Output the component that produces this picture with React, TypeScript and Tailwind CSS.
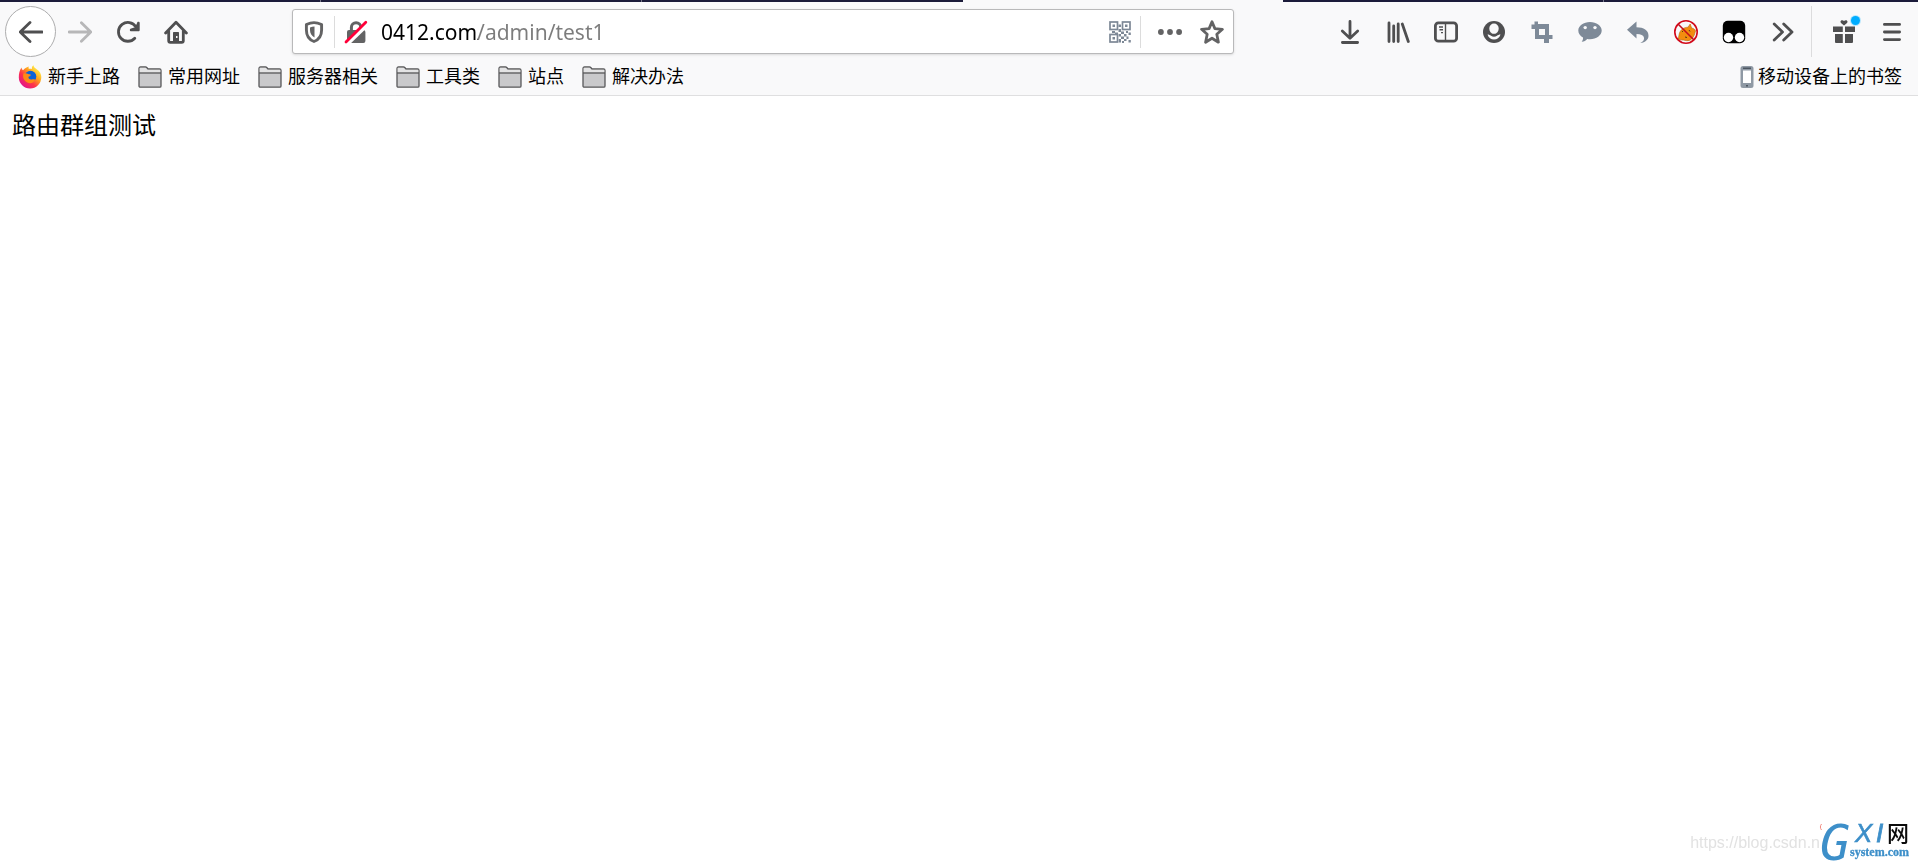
import type { ReactNode } from "react";

type IconProps = { children: ReactNode; className?: string };

function Icon({ children, className = "" }: IconProps) {
  return (
    <svg viewBox="0 0 24 24" className={`h-6 w-6 shrink-0 ${className}`} fill="none" aria-hidden="true">
      {children}
    </svg>
  );
}

const stroke = {
  stroke: "currentColor",
  strokeWidth: 2.8,
  strokeLinecap: "round",
  strokeLinejoin: "round",
} as const;

const BackIcon = () => (
  <Icon>
    <path {...stroke} d="M23.2 12H1.2M11 2.4 1.2 12l9.8 9.6" />
  </Icon>
);

const ForwardIcon = () => (
  <Icon>
    <path {...stroke} d="M1 12h21.8M13.4 2.8 22.8 12l-9.4 9.2" />
  </Icon>
);

const ReloadIcon = () => (
  <Icon>
    <path {...stroke} d="M18.8 18.2A9.4 9.4 0 1 1 19.8 6.8" />
    <path d="M22.4 1.8c-.8 0-1.3.5-1.3 1.200L19 7.200l-4.600 1.500c-.8.3-.8 2.600.4 2.600h7.600c.8 0 1.300-.5 1.300-1.300V3c0-.7-.5-1.200-1.300-1.200z" fill="currentColor" />
  </Icon>
);

const HomeIcon = () => (
  <Icon>
    <path {...stroke} d="M1.600 13 12 2.200 22.400 13M4.700 11v9.800c0 1 .6 1.600 1.600 1.600h11.400c1 0 1.600-.6 1.600-1.600V11" />
    <path d="M9 22v-9c0-.6.4-1 1-1h4c.6 0 1 .4 1 1v9z" fill="currentColor" />
    <rect x="12" y="16" width="1.500" height="2" fill="#f9f9fa" />
  </Icon>
);

const ShieldIcon = () => (
  <Icon>
    <path
      d="M12 2.600c2.500 0 5 .7 7.600 1.900V10c0 5.300-2.400 9.600-7.600 11.500C6.800 19.600 4.400 15.300 4.400 10V4.500C7 3.300 9.500 2.600 12 2.600z"
      stroke="currentColor"
      strokeWidth="2.900"
      strokeLinejoin="round"
    />
    <path d="M12.500 6.600c-1.500 0-3 .3-4.500.8V10c0 3.200 1.400 6 4.500 7.400z" fill="currentColor" />
  </Icon>
);

const InsecureIcon = () => (
  <Icon>
    <path d="M7.400 11V7.500a4.700 4.700 0 0 1 9.400 0V11" stroke="currentColor" strokeWidth="3" />
    <rect x="3" y="10" width="18.400" height="13" rx="2" fill="currentColor" />
    <path d="M3 23.500 23.500 3.800" stroke="#fff" strokeWidth="5" />
    <path d="M2 22 21.800 2.200" stroke="#ff0039" strokeWidth="2.800" strokeLinecap="round" />
  </Icon>
);

const QrIcon = () => (
  <Icon className="text-[#7d8896]">
    <g stroke="currentColor" strokeWidth="1.700">
      <rect x="2" y="2" width="7.500" height="7.500" />
      <rect x="14.500" y="2" width="7.500" height="7.500" />
      <rect x="2" y="14.500" width="7.500" height="7.500" />
    </g>
    <path
      d="M4.500 4.500h2.500v2.500H4.500zM17 4.500h2.500v2.500h-2.500zM4.500 17h2.500v2.500H4.500zM10.500 4.500h2.500v2.500h-2.500zM10.500 9h2.500v3h-2.500zM4 11h3v2H4zM7 12.500h3v1.500H7zM13 11.500h3v2.500h-3zM18 11h2v2h-2zM20.500 12.500h2.300v2.500h-2.300zM10.700 14h2.300v2.500h-2.300zM16 14h2.500v2.500H16zM13 16.500h3V19h-3zM18.500 16.500h2v2.500h-2zM10.700 19H13v3.500h-2.300zM16 19h2.500v2H16zM14 21h2v2h-2zM20.500 20h2.300v2.500h-2.300z"
      fill="currentColor"
    />
  </Icon>
);

const DotsIcon = () => (
  <Icon>
    <g fill="currentColor">
      <circle cx="2.900" cy="12" r="2.900" />
      <circle cx="12" cy="12" r="2.900" />
      <circle cx="21.100" cy="12" r="2.900" />
    </g>
  </Icon>
);

const StarIcon = () => (
  <Icon>
    <path
      {...stroke}
      d="M12 1.800 14.900 8.600 22.400 9.300 16.800 14.300 18.400 22.200 12 18.200 5.600 22.200 7.200 14.300 1.600 9.300 9.100 8.600Z"
    />
  </Icon>
);

const DownloadIcon = () => (
  <Icon>
    <path {...stroke} d="M12 1.500v16.300M4.300 11l7.700 7.200 7.700-7.200M4.400 22.500h15.200" />
  </Icon>
);

const LibraryIcon = () => (
  <Icon>
    <path {...stroke} d="M3 3v18.500M7.700 6v15.500M12.200 4v17.500M16.300 4l6 17.500" />
  </Icon>
);

const SidebarIcon = () => (
  <Icon>
    <rect x="1.400" y="2.800" width="21.200" height="18.400" rx="3" stroke="currentColor" strokeWidth="2.800" />
    <path d="M11.500 3v18M5 7h4M5.500 9.700H9M7 12.600h2" stroke="currentColor" strokeWidth="1.400" />
  </Icon>
);

const AccountIcon = () => (
  <Icon>
    <circle cx="12" cy="12" r="11" fill="currentColor" />
    <path d="M7.300 8.200a4.700 4.700 0 0 1 9.400 0c0 3-1.700 5.600-4.700 5.600s-4.700-2.600-4.700-5.600z" fill="#f9f9fa" />
    <path d="M5.500 14.500c1.500 0 2.700.6 3.500 1.300 1.800 1.200 4.200 1.200 6 0 .8-.7 2-1.300 3.500-1.300-1 3.300-3.500 5-6.500 5s-5.500-1.700-6.500-5z" fill="#f9f9fa" />
  </Icon>
);

const CropIcon = () => (
  <Icon className="text-[#7e8a98]">
    <path d="M4.500 1.500H8V4h11v11h3.500v4H19v4h-5v-4H5V9H1.500V4.500h3zM9 9v6h6V9z" fill="currentColor" fillRule="evenodd" />
  </Icon>
);

const ChatIcon = () => (
  <Icon className="text-[#7e8a98]">
    <path d="M12 2c6.400 0 11.700 3.700 11.700 8.500S18.400 19.200 12 19.200c-1 0-1.900 0-2.800-.3-1.300 1.500-3 2.600-5.500 2.900 1-1.200 1.500-2.500 1.300-4.300C2.200 15.900.3 13.500.3 10.500.3 5.700 5.600 2 12 2z" fill="currentColor" />
    <circle cx="7.200" cy="7.600" r="1.700" fill="#f9f9fa" />
    <circle cx="17" cy="7.600" r="1.700" fill="#f9f9fa" />
  </Icon>
);

const UndoIcon = () => (
  <Icon className="text-[#7e8a98]">
    <path d="M10.500 1.500v5.800c7.300 0 12 3 12 8.500 0 3.800-3 6.700-8.200 7.200 3.300-1.600 4-3.500 3.700-5.300-.5-2.500-3-3.700-7.500-3.700v4.500L1 9.800z" fill="currentColor" />
  </Icon>
);

const BlockedFoxIcon = () => (
  <Icon>
    <path d="M4 19c1-2 .8-4 1.500-6C7 9 10 7.500 14 7.200L16.200 4l1.400 4c2.200.5 3.500 1.400 3.900 3-.8 3.500-2.500 8.500-6.500 9.500-3 .7-5.500-.8-7-.5z" fill="#f28c0f" stroke="#b0660f" strokeWidth=".6" />
    <path d="m8 11 1 1M15 10l1 1.500M11 17l2 .5" stroke="#5b3a12" strokeWidth="1" />
    <circle cx="12" cy="12" r="11.200" stroke="#d2091a" strokeWidth="1.600" />
    <path d="m4 4 16 16" stroke="#c40d1c" strokeWidth="1.600" />
  </Icon>
);

const MonkeyIcon = () => (
  <Icon>
    <rect x=".8" y=".8" width="22.400" height="22.400" rx="5" fill="#000" />
    <circle cx="6.500" cy="17.500" r="4.700" fill="#fff" />
    <circle cx="17.500" cy="17.500" r="4.700" fill="#fff" />
  </Icon>
);

const OverflowIcon = () => (
  <Icon>
    <path {...stroke} d="m4.200 4 8.300 8-8.300 8M13.700 4l8.300 8-8.300 8" />
  </Icon>
);

const GiftIcon = () => (
  <Icon>
    <path
      d="M1 6.500h9.800V12H1zM13 6.500h10V12H13zM3 14h7.800v9H4.300c-.8 0-1.300-.5-1.300-1.300zM13 14h8v7.700c0 .8-.5 1.300-1.300 1.300H13zM12 5.600 9 3C7.500 1.500 9.500-.8 12 1c2.500-1.800 4.500.5 3 2z"
      fill="currentColor"
    />
  </Icon>
);

const MenuIcon = () => (
  <Icon>
    <path {...stroke} d="M4.400 4.400h15.200M4.400 12h15.200M4.400 19.600h15.200" />
  </Icon>
);

const FolderIcon = () => (
  <Icon>
    <path d="M1 21V3.500C1 2.600 1.600 2 2.500 2h5c.7 0 1 .3 1.500.8l1 1.200h11.500c.9 0 1.500.6 1.500 1.500V21c0 .7-.5 1.200-1.200 1.200H2.200C1.500 22.200 1 21.700 1 21z" fill="#c9c9cb" stroke="#58585a" strokeWidth="1.300" />
    <path d="M1.700 7.500V2.700h6l1.600 2h13v2.800z" fill="#e3e3e4" />
    <path d="M1 8h22" stroke="#58585a" strokeWidth="1.300" />
  </Icon>
);

const FirefoxIcon = () => (
  <Icon>
    <defs>
      <linearGradient id="fox" x1="20" y1="3" x2="4" y2="20" gradientUnits="userSpaceOnUse">
        <stop offset="0" stopColor="#fff44f" />
        <stop offset=".35" stopColor="#ffa21c" />
        <stop offset=".65" stopColor="#ff3647" />
        <stop offset="1" stopColor="#e31587" />
      </linearGradient>
    </defs>
    <path d="M3.500 2.500c.2 1.500.8 2.300 1.500 2.800C7 3 9 2 11 1.500c-.6.8-.5 1.600-.2 2.300 1.200-.3 2.500 0 3.200.2-.5-1.500.3-3 1.500-3.700 0 2 2 3 3.500 4.200 3 2 4.300 4.700 4.300 7.700A11.200 11.200 0 0 1 12 23.400 11.200 11.200 0 0 1 .8 12.500C.8 9 1.500 5 3.500 2.500z" fill="url(#fox)" />
    <circle cx="12.500" cy="11.500" r="5.800" fill="#0a62d8" />
    <path d="M5.500 8.500c2-.6 3.500 0 4.700.5 1 .3 2.300.2 2.600.7.4.8-1.500 1.500-2.300 2.100-.5 1.800 1.300 3 3.200 2.700 2-.5 3.500-.2 3.600.5-1.600 3-5 4-8 2.500-3.500-1.700-5-5.500-3.800-9z" fill="#ff8a16" />
  </Icon>
);

const PhoneIcon = () => (
  <svg viewBox="0 0 14 24" className="h-6 w-[14px] shrink-0" fill="none" aria-hidden="true">
    <rect x=".5" y="1" width="13" height="22" rx="2.500" fill="#8f99a4" />
    <rect x="3" y="5.500" width="8" height="12.500" fill="#fff" />
    <path d="M3 3.200h8M6 20.700h2" stroke="#4c5661" strokeWidth="1.500" />
  </svg>
);

const bookmarks = [
  { label: "新手上路", icon: <FirefoxIcon /> },
  { label: "常用网址", icon: <FolderIcon /> },
  { label: "服务器相关", icon: <FolderIcon /> },
  { label: "工具类", icon: <FolderIcon /> },
  { label: "站点", icon: <FolderIcon /> },
  { label: "解决办法", icon: <FolderIcon /> },
];

const tools = [
  { label: "Downloads", icon: <DownloadIcon /> },
  { label: "Library", icon: <LibraryIcon /> },
  { label: "Sidebars", icon: <SidebarIcon /> },
  { label: "Account", icon: <AccountIcon /> },
  { label: "Screenshot", icon: <CropIcon /> },
  { label: "Chat", icon: <ChatIcon /> },
  { label: "Undo", icon: <UndoIcon /> },
  { label: "Blocker", icon: <BlockedFoxIcon /> },
  { label: "Scripts", icon: <MonkeyIcon /> },
  { label: "More tools", icon: <OverflowIcon /> },
];

function ToolButton({ label, children }: { label: string; children: ReactNode }) {
  return (
    <button type="button" aria-label={label} className="relative mt-[2px] flex h-12 w-12 shrink-0 items-center justify-center">
      {children}
    </button>
  );
}

function TabStrip() {
  return (
    <div className="flex h-[2px]">
      <div className="flex-1 border-r border-[#77778a] bg-[#1b1b3a]" />
      <div className="flex-1 border-r border-[#77778a] bg-[#1b1b3a]" />
      <div className="flex-1 bg-[#1b1b3a]" />
      <div className="flex-1" />
      <div className="flex-1 border-r border-[#77778a] bg-[#1b1b3a]" />
      <div className="w-[314px] bg-[#1b1b3a]" />
    </div>
  );
}

function UrlBar() {
  return (
    <div className="mx-[92px] mt-[3px] flex h-[45px] min-w-0 flex-1 items-center rounded-[3px] border border-[#b9b9ba] bg-white text-[#636364] shadow-sm">
      <button type="button" aria-label="Tracking protection" className="flex h-8 w-[42px] items-center justify-center border-r border-[#dcdcdc]">
        <ShieldIcon />
      </button>
      <button type="button" aria-label="Connection not secure" className="flex w-[42px] items-center justify-center">
        <InsecureIcon />
      </button>
      <input
        type="text"
        aria-label="Address"
        defaultValue="0412.com/admin/test1"
        className="ml-1 min-w-0 flex-1 bg-linear-to-r from-black from-[97px] to-[#7c7c7c] to-[97px] bg-clip-text font-['Noto_Sans','Open_Sans',sans-serif] text-[21px] leading-8 text-transparent outline-none"
      />
      <button type="button" aria-label="QR code" className="flex h-8 w-[42px] items-center justify-center border-r border-[#dcdcdc]">
        <QrIcon />
      </button>
      <button type="button" aria-label="Page actions" className="ml-2 flex w-[42px] items-center justify-center">
        <DotsIcon />
      </button>
      <button type="button" aria-label="Bookmark this page" className="flex w-[42px] items-center justify-center">
        <StarIcon />
      </button>
    </div>
  );
}

function Toolbar() {
  return (
    <div className="flex h-[60px] items-start pt-1 pr-[2px] text-[#4f4f50]">
      <button type="button" aria-label="Back" className="ml-[5px] flex h-[51px] w-[51px] shrink-0 items-center justify-center rounded-full border border-[#adadae] bg-white">
        <BackIcon />
      </button>
      <button type="button" aria-label="Forward" disabled className="mt-[2px] flex h-12 w-12 shrink-0 items-center justify-center text-[#b7b7b8]">
        <ForwardIcon />
      </button>
      <ToolButton label="Reload">
        <ReloadIcon />
      </ToolButton>
      <ToolButton label="Home">
        <HomeIcon />
      </ToolButton>
      <UrlBar />
      {tools.map((tool) => (
        <ToolButton key={tool.label} label={tool.label}>
          {tool.icon}
        </ToolButton>
      ))}
      <div className="mr-2 ml-[5px] h-[51px] w-px bg-[#dcdcdd]" />
      <ToolButton label="What's new">
        <GiftIcon />
        <span className="absolute top-2 right-2 h-[9px] w-[9px] rounded-full bg-[#00adff] ring-1 ring-[#b9e6fb]" />
      </ToolButton>
      <ToolButton label="Menu">
        <MenuIcon />
      </ToolButton>
    </div>
  );
}

function BookmarksBar() {
  return (
    <nav className="flex h-[34px] items-center justify-between border-b border-[#dfdfe0] pr-4 pb-[3px] pl-[18px] text-lg leading-6">
      <div className="flex gap-[18px]">
        {bookmarks.map((item) => (
          <a key={item.label} href="#" className="flex items-center gap-[6px] whitespace-nowrap">
            {item.icon}
            {item.label}
          </a>
        ))}
      </div>
      <a href="#" className="flex items-center gap-1 whitespace-nowrap">
        <PhoneIcon />
        移动设备上的书签
      </a>
    </nav>
  );
}

function Watermark() {
  return (
    <div className="fixed right-0 bottom-0 flex items-end">
      <span className="pb-[6px] font-['Liberation_Sans',sans-serif] text-base leading-6 text-[#e2e2e2]">https://blog.csdn.n</span>
      <svg viewBox="0 -14 98 56" className="h-14 w-[98px] overflow-visible" role="img" aria-label="GXI网 system.com">
        <path d="M1.500 5c-1.500 2-1.500 4 0 6" stroke="#f08a80" strokeWidth="1" fill="none" />
        <g fill="#3d8fc9" fontStyle="italic">
          <text x="0" y="41" fontFamily="DejaVu Sans Mono" fontSize="50">G</text>
          <text x="35" y="23" fontFamily="Liberation Sans" fontSize="26" stroke="#3d8fc9" strokeWidth=".6">X</text>
          <text x="56" y="23" fontFamily="Liberation Sans" fontSize="26" stroke="#3d8fc9" strokeWidth=".8">I</text>
        </g>
        <text x="67" y="22" fontFamily="Noto Sans CJK SC" fontSize="22" fontWeight="500" fill="#0b0b0b">网</text>
        <text x="30" y="37" fontFamily="Liberation Serif" fontSize="12" fontWeight="700" fill="#3d8fc9" stroke="#3d8fc9" strokeWidth=".3">system.com</text>
      </svg>
    </div>
  );
}

export default function App() {
  return (
    <div className="min-h-screen bg-white font-['Liberation_Sans','Noto_Sans_CJK_SC',sans-serif] text-black">
      <header className="bg-[#f9f9fa]">
        <TabStrip />
        <Toolbar />
        <BookmarksBar />
      </header>
      <main className="px-3 py-[14px] text-2xl leading-8">路由群组测试</main>
      <Watermark />
    </div>
  );
}
